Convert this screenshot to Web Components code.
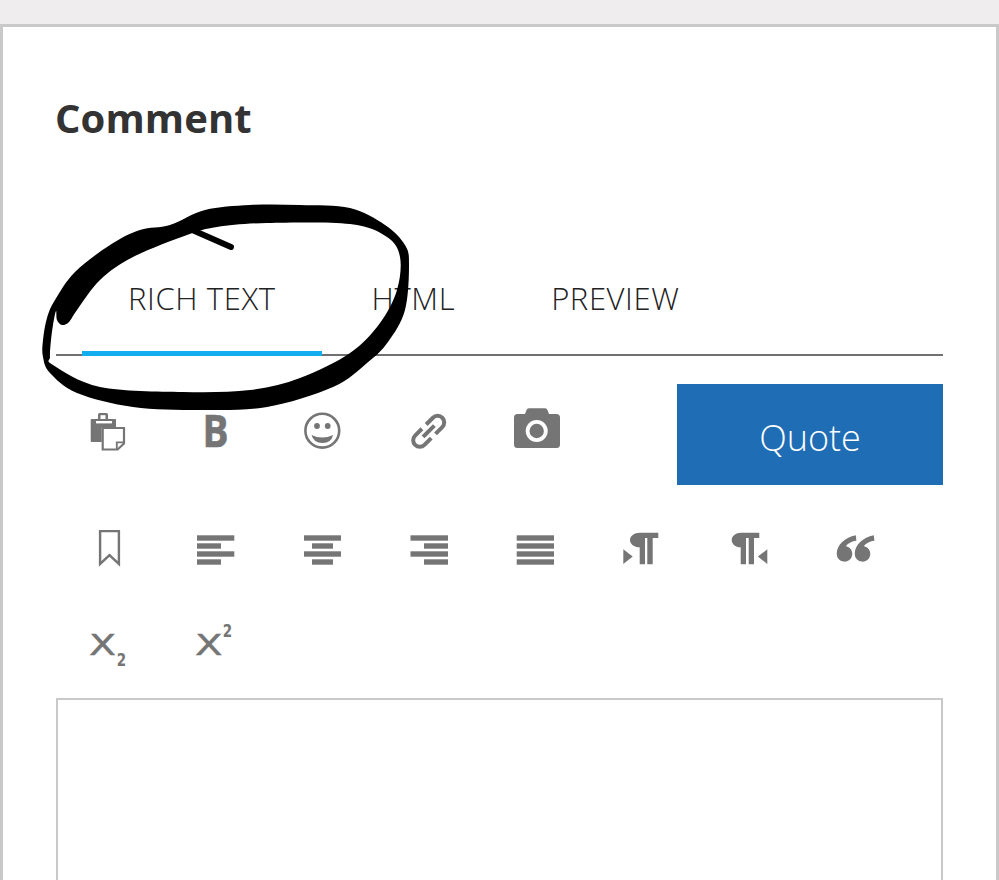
<!DOCTYPE html>
<html lang="en"><head><meta charset="utf-8"><title>Comment</title>
<style>
html,body{margin:0;padding:0;background:#fff;height:880px;overflow:hidden}
body{font-family:"Open Sans","Liberation Sans",sans-serif;color:#333}
</style></head>
<body>
<comment-panel>
  <span slot="title">Comment</span>
  <editor-tab slot="tabs" active>RICH TEXT</editor-tab>
  <editor-tab slot="tabs">HTML</editor-tab>
  <editor-tab slot="tabs">PREVIEW</editor-tab>
  <tool-row slot="tools" first>
    <tool-icon name="paste"></tool-icon><tool-icon name="bold"></tool-icon><tool-icon name="smile"></tool-icon><tool-icon name="link"></tool-icon><tool-icon name="camera"></tool-icon>
    <quote-button slot="end">Quote</quote-button>
  </tool-row>
  <tool-row slot="tools">
    <tool-icon name="bookmark"></tool-icon><tool-icon name="left"></tool-icon><tool-icon name="center"></tool-icon><tool-icon name="right"></tool-icon><tool-icon name="justify"></tool-icon><tool-icon name="ltr"></tool-icon><tool-icon name="rtl"></tool-icon><tool-icon name="quote"></tool-icon>
  </tool-row>
  <tool-row slot="tools">
    <tool-icon name="sub"></tool-icon><tool-icon name="sup"></tool-icon>
  </tool-row>
</comment-panel>
<ink-mark></ink-mark>
<script>
const G='#757575';
const bars=(x1,x2,sx1,sx2)=>[535.3,543.3,551.3,559.3].map((y,i)=>i%2?`<rect x="${sx1}" y="${y}" width="${sx2-sx1}" height="5.4"/>`:`<rect x="${x1}" y="${y}" width="${x2-x1}" height="5.4"/>`).join('');
const Q='M855.8 535.3C845 537.5 836.7 545 836.7 553.8a7.8 7.8 0 1 0 9.4-7.6C847 544 851 541.5 856.4 540.8Z';
const XA='font-family="DejaVu Sans" font-size="29" lengthAdjust="spacingAndGlyphs" stroke="'+G+'" stroke-width=".45"';
const TW='font-family="DejaVu Sans" font-weight="700" font-size="17" lengthAdjust="spacingAndGlyphs"';
const ICONS={
 paste:[108.5,431,`<path d="M98 419v-4.5q0-1.5 1.5-1.5h7q1.5 0 1.5 1.5V419h7q1 0 1 1v7h-14.3v15H91.7q-1 0-1-1V420q0-1 1-1z"/><rect x="96" y="421" width="16" height="2.4" fill="#fff"/><rect x="100.5" y="415.2" width="5" height="3.8" fill="#fff"/><path d="M102.7 428H124v15.6l-6.4 5.9h-14.9z" fill="#fff" stroke="${G}" stroke-width="2.2"/><path d="M116.8 449v-6.6h7.2" fill="none" stroke="${G}" stroke-width="1.8"/>`],
 bold:[215.5,431,`<text x="202.6" y="447.3" font-family="Open Sans" font-weight="700" font-size="44" textLength="26" lengthAdjust="spacingAndGlyphs" stroke="${G}" stroke-width=".6">B</text>`],
 smile:[322.5,431,`<circle cx="322.3" cy="430.7" r="16.9" fill="none" stroke="${G}" stroke-width="2.6"/><circle cx="317" cy="426" r="2.9"/><circle cx="327.7" cy="426" r="2.9"/><path d="M311.5 435q10.8 5.2 21.6 0q-2 8.2-10.8 8t-10.8-8z"/>`],
 link:[429.5,431,`<g transform="translate(428.7 431.3) rotate(-45)" fill="none" stroke="${G}" stroke-width="4"><path d="M3 -6.6H12.6a6.6 6.6 0 0 1 0 13.2H3"/><path d="M-3 -6.6H-12.6a6.6 6.6 0 0 0 0 13.2H-3"/><path d="M-8 0H8"/></g>`],
 camera:[536.5,431,`<path d="M517.5 414H525l1.4-3.8q.7-1.9 2.6-1.9h16q1.9 0 2.6 1.9l1.4 3.8h7.5q3.5 0 3.5 3.5v27q0 3.5-3.5 3.5h-39q-3.5 0-3.5-3.5v-27q0-3.5 3.5-3.5z"/><circle cx="536.7" cy="431" r="11" fill="#fff"/><circle cx="536.7" cy="431" r="7.2"/>`],
 bookmark:[108.5,549,`<path d="M100.1 531.1H118.9V564L109.5 555.2 100.1 564Z" fill="none" stroke="${G}" stroke-width="2.4"/>`],
 left:[215.5,549,bars(197,234.3,197,221)],
 center:[322.5,549,bars(304,341,312,333)],
 right:[429.5,549,bars(410.5,448,424,448)],
 justify:[536.5,549,bars(516.7,554,516.7,554)],
 ltr:[643.5,549,`<path d="M623.3 549.3l9.4 7.3-9.4 7.4z"/><path d="M640 532.7h18.3v5.3h-5.6v26.3h-5.4V538H645v26.3h-5.3v-17C634 547.3 630 544 630 540s4-7.3 10-7.3z"/>`],
 rtl:[750.5,549,`<path d="M767.3 549.3l-9.4 7.3 9.4 7.4z"/><path d="M741 532.7h18.3v5.3H754v26.3h-5.3V538H746v26.3h-5.3v-17c-5.4 0-9-3.3-9-7.3s4-7.3 9.3-7.3z"/>`],
 quote:[857.5,549,`<path d="${Q}"/><path transform="translate(18 0)" d="${Q}"/>`],
 sub:[108.5,643,`<text x="89" y="655" ${XA} textLength="27">X</text><text x="116.8" y="665.7" ${TW} textLength="9.4">2</text>`],
 sup:[215.5,643,`<text x="195" y="655" ${XA} textLength="27.5">X</text><text x="222.8" y="636.7" ${TW} textLength="9.4">2</text>`]
};
const smooth=(p)=>{const n=p.length;let d=`M${p[0][0]} ${p[0][1]}`;for(let i=0;i<n;i++){const a=p[(i-1+n)%n],b=p[i],c=p[(i+1)%n],e=p[(i+2)%n];d+=`C${(b[0]+(c[0]-a[0])/6).toFixed(1)} ${(b[1]+(c[1]-a[1])/6).toFixed(1)} ${(c[0]-(e[0]-b[0])/6).toFixed(1)} ${(c[1]-(e[1]-b[1])/6).toFixed(1)} ${c[0]} ${c[1]}`}return d+'Z'};
const OUTER=[[43,340],[47,318],[55,300],[75,272],[110,245],[140,230],[170,225],[205,210],[250,205],[300,205],[350,208],[385,225],[405,245],[409,265],[405,310],[388,342],[367,363],[333,387],[267,407],[200,410],[133,407],[77,393],[50,373],[43,357]];
const INNER=[[51,340],[50,357],[53,365],[100,387],[183,392],[250,390],[300,378],[350,353],[380,323],[397,290],[400,257],[387,237],[350,224],[267,223],[217,227],[187,235],[133,257],[100,280],[77,310],[69,322],[62,325],[57,320],[56,311],[53,325]];
class CommentPanel extends HTMLElement{constructor(){super();this.attachShadow({mode:'open'}).innerHTML=`<style>
:host{display:block}
.top{height:24px;background:#efedee}
.card{border:3px solid #c9c9c9;border-bottom:0;padding:63px 53px 0}
h2{margin:0 0 0 -1px;font:700 40px/56px "Open Sans","Liberation Sans",sans-serif;color:#333;letter-spacing:.1px}
.tabs{display:flex;gap:4px;margin-top:110px;padding-left:26px;border-bottom:2px solid #707070;height:98px}
.tools{margin-top:28px}
.box{margin-top:8px;height:300px;border:2px solid #c9c9c9;box-sizing:border-box;background:#fff}
</style><div class="top"></div><div class="card"><h2><slot name="title"></slot></h2><div class="tabs"><slot name="tabs"></slot></div><div class="tools"><slot name="tools"></slot></div><div class="box"></div></div>`}}
class EditorTab extends HTMLElement{constructor(){super();this.attachShadow({mode:'open'}).innerHTML=`<style>
:host{display:block;box-sizing:border-box;height:100px;padding:0 46px;font:300 31px/84px "Open Sans","Liberation Sans",sans-serif;color:#222;letter-spacing:.6px;white-space:nowrap;border-bottom:5px solid transparent}
:host([active]){border-bottom-color:#12aeef}
</style><slot></slot>`}}
class ToolRow extends HTMLElement{constructor(){super();this.attachShadow({mode:'open'}).innerHTML=`<style>
:host{display:flex;justify-content:space-between;align-items:flex-start;margin-left:-1px}
:host([first]){margin-bottom:17px}
.i{display:flex}
</style><div class="i"><slot></slot></div><slot name="end"></slot>`}}
class ToolIcon extends HTMLElement{constructor(){super();const [cx,cy,svg]=ICONS[this.getAttribute('name')];this.attachShadow({mode:'open'}).innerHTML=`<style>
:host{display:flex;width:107px;height:94px;align-items:center;justify-content:center}
svg{display:block;width:61px;height:60px;overflow:visible}
</style><svg viewBox="${cx-30.5} ${cy-30} 61 60" fill="${G}" aria-hidden="true">${svg}</svg>`}}
class QuoteButton extends HTMLElement{constructor(){super();this.attachShadow({mode:'open'}).innerHTML=`<style>
:host{display:flex;width:266px;height:101px;align-items:center;justify-content:center;background:#1f6db5;color:#fff;font:300 36px/1 "Open Sans","Liberation Sans",sans-serif;padding-top:6px;box-sizing:border-box}
</style><slot></slot>`}}
class InkMark extends HTMLElement{constructor(){super();this.attachShadow({mode:'open'}).innerHTML=`<style>
:host{position:absolute;left:0;top:0;width:999px;height:880px;pointer-events:none}
svg{display:block}
</style><svg width="999" height="880" viewBox="0 0 999 880" fill="none"><path fill="#000" fill-rule="evenodd" d="${smooth(OUTER)}${smooth(INNER)}"/><path d="M190 229L231 247" stroke="#000" stroke-width="6" stroke-linecap="round"/></svg>`}}
customElements.define('comment-panel',CommentPanel);
customElements.define('editor-tab',EditorTab);
customElements.define('tool-row',ToolRow);
customElements.define('tool-icon',ToolIcon);
customElements.define('quote-button',QuoteButton);
customElements.define('ink-mark',InkMark);
</script>
</body></html>
